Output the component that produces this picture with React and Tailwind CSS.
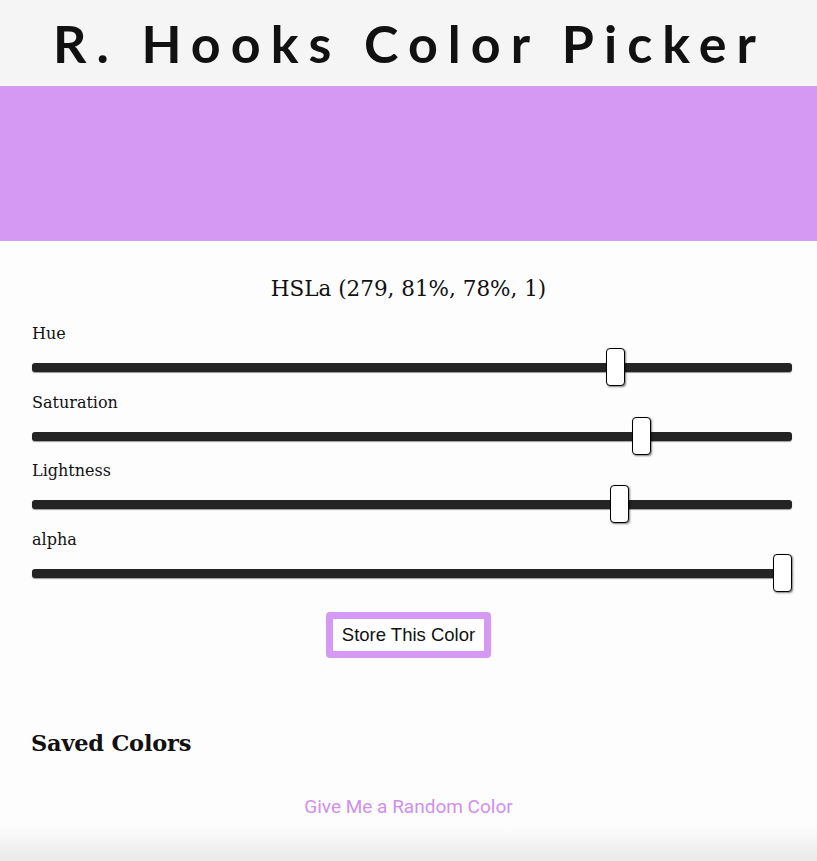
const sliders = [
  { label: "Hue", pct: 279 / 360 },
  { label: "Saturation", pct: 0.81 },
  { label: "Lightness", pct: 0.78 },
  { label: "alpha", pct: 1 },
];

function Slider({ label, pct }) {
  return (
    <div className="h-[68.5px]">
      <div className="text-[16px] leading-5 text-[#111] pt-[1px]">{label}</div>
      <div className="relative mt-[19px] h-[9px] rounded-[3px] bg-[#242424] shadow-[0_1px_1px_rgba(0,0,0,0.4)]">
        <div
          className="absolute top-[-15px] h-[38px] w-[19px] rounded-[4px] border border-black bg-white shadow-[1px_1px_2px_rgba(0,0,0,0.5)]"
          style={{ left: `calc(${pct} * (100% - 19px))` }}
        />
      </div>
    </div>
  );
}

export default function App() {
  return (
    <div className="w-[817px] h-[861px] bg-[#fdfdfd] overflow-hidden relative">
      {/* Title */}
      <div className="h-[86px] bg-[#f5f5f5] flex items-center justify-center">
        <h1 className="font-['Lato',sans-serif] font-bold text-[52px] tracking-[0.193em] text-[#111] leading-none ml-[2px]">
          R. Hooks Color Picker
        </h1>
      </div>

      {/* Swatch */}
      <div className="h-[155px] bg-[hsl(279,81%,78%)]" />

      {/* Controls */}
      <div className="font-['DejaVu_Serif',serif]">
        <div className="text-center text-[21.5px] text-[#111] mt-[34px] leading-7">
          HSLa (279, 81%, 78%, 1)
        </div>
        <div className="pl-[32px] pr-[25px] mt-[20px]">
          {sliders.map((s) => (
            <Slider key={s.label} label={s.label} pct={s.pct} />
          ))}
        </div>

        <div className="flex justify-center mt-[15px]">
          <button className="border-[7px] border-[hsl(279,81%,78%)] rounded-[4px] bg-white px-[9px] h-[46px] font-['Liberation_Sans',sans-serif] text-[18.5px] text-[#111]">
            Store This Color
          </button>
        </div>

        <h2 className="mt-[71px] pl-[31px] font-bold text-[22.5px] text-[#111] leading-7 tracking-[-0.01em]">
          Saved Colors
        </h2>

        <div className="text-center mt-[36px] font-['Roboto',sans-serif] text-[19px] text-[#d08feb]">
          Give Me a Random Color
        </div>
      </div>

      <div className="absolute left-0 right-0 bottom-0 h-[34px] bg-gradient-to-b from-[#fdfdfd] to-[#e9e9e9]" />
    </div>
  );
}
